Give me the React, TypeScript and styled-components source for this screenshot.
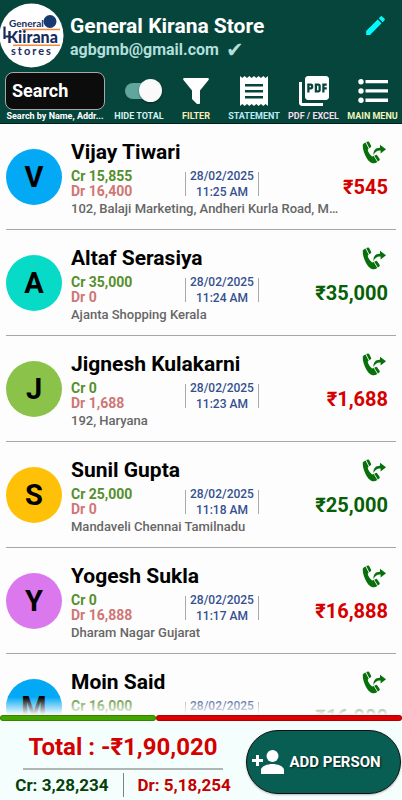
import React, { useState } from "react";
import styled, { createGlobalStyle, css } from "styled-components";

const GlobalStyle = createGlobalStyle`
  * { box-sizing: border-box; }
  body { margin: 0; background: #fdfdfd; font-family: Roboto, "Noto Sans", sans-serif; font-weight: 700; }
  button, input { font: inherit; color: inherit; }
  button { border: 0; padding: 0; background: none; cursor: pointer; }
  h1, h2, p, ul { margin: 0; padding: 0; font-weight: inherit; }
`;

const Screen = styled.div`
  display: flex;
  flex-direction: column;
  height: 100vh;
  overflow: hidden;
`;

const Header = styled.header`
  flex: none;
  background: #06453c;
  border-bottom: 1px solid #02201c;
  color: #fff;
`;

const Profile = styled.div`
  display: flex;
  gap: 6px;
  padding: 3px 14px 0 0;
`;

const Logo = styled.svg`
  display: block;
  flex: none;
  width: 64px;
  height: 65px;
`;

const Identity = styled.div`
  flex: 1;
  min-width: 0;
  padding-top: 11px;
`;

const StoreName = styled.h1`
  font-size: 21px;
  line-height: 24px;
  white-space: nowrap;
`;

const Email = styled.p`
  display: flex;
  align-items: center;
  gap: 7px;
  color: #b2dfdb;
  font-size: 16px;
  line-height: 24px;
`;

const Verified = styled.span`
  font-family: "DejaVu Sans", sans-serif;
  font-size: 21px;
`;

const EditButton = styled.button`
  align-self: flex-start;
  margin-top: 10px;
  color: #00fbff;
`;

const Icon = styled.svg<{ $w: number; $h?: number }>`
  display: block;
  flex: none;
  width: ${(p) => p.$w}px;
  height: ${(p) => p.$h ?? p.$w}px;
  fill: currentColor;
`;

const Toolbar = styled.div`
  display: grid;
  grid-template-columns: 110fr 58fr 56fr 60fr 59fr 59fr;
  padding-top: 4px;
`;

const toolLayout = css`
  display: flex;
  flex-direction: column;
  align-items: center;
`;

const ToolField = styled.label`${toolLayout}`;
const ToolButton = styled.button`${toolLayout}`;

const ToolIcon = styled.span`
  display: flex;
  align-items: center;
  justify-content: center;
  width: 100%;
  height: 37px;
`;

const ToolLabel = styled.span<{ $color: string }>`
  color: ${(p) => p.$color};
  font-size: 9px;
  line-height: 14px;
  white-space: nowrap;
`;

const SearchInput = styled.input`
  width: 100px;
  height: 38px;
  padding: 0 6px;
  background: #0c0c0c;
  border: 1px solid #a9a9a9;
  border-radius: 8px;
  outline: none;
  font-size: 18px;
  &::placeholder { color: #fff; opacity: 1; }
`;

const Toggle = styled.input`
  appearance: none;
  display: flex;
  align-items: center;
  width: 33px;
  height: 16px;
  margin: 0 0 0 4px;
  border-radius: 8px;
  background: #60a69d;
  &::before {
    content: "";
    width: 23px;
    height: 23px;
    flex: none;
    border-radius: 50%;
    background: #fafafa;
    box-shadow: 0 1px 2px #0006;
  }
  &:checked::before { margin-left: 14px; }
`;

const ListArea = styled.main`
  flex: 1;
  min-height: 0;
  overflow: hidden;
  position: relative;
  &::after {
    content: "";
    position: absolute;
    inset: auto 0 0;
    height: 18px;
    background: linear-gradient(#fdfdfd00, #fdfdfd);
  }
`;

const List = styled.ul`
  list-style: none;
  padding: 0 6px;
`;

const Row = styled.li`
  display: flex;
  align-items: flex-start;
  gap: 9px;
  height: 106px;
  padding: 14px 8px 0 0;
  border-bottom: 1px solid #a6a6a6;
`;

const Avatar = styled.div<{ $color: string }>`
  flex: none;
  display: flex;
  align-items: center;
  justify-content: center;
  width: 56px;
  height: 56px;
  margin-top: 11px;
  border-radius: 50%;
  background: ${(p) => p.$color};
  color: #000;
  font-size: 29px;
`;

const Details = styled.div`
  flex: 1;
  min-width: 0;
`;

const Name = styled.h2`
  margin-bottom: 3px;
  color: #000;
  font-size: 21px;
  line-height: 28px;
`;

const Summary = styled.div`
  display: flex;
  align-items: center;
`;

const Ledger = styled.div`
  width: 114px;
  font-size: 14px;
  line-height: 15px;
`;

const Credit = styled.p`color: #568f2c;`;
const Debit = styled.p`color: #cf7676;`;

const Stamp = styled.div`
  display: flex;
  flex-direction: column;
  justify-content: center;
  height: 24px;
  padding: 0 4px;
  border: solid #a9a9a9;
  border-width: 0 1px;
  color: #34508f;
  font-size: 12px;
  font-weight: 500;
  line-height: 16px;
  text-align: center;
`;

const Address = styled.p`
  max-width: 270px;
  overflow: hidden;
  color: #666;
  font-size: 13px;
  font-weight: 500;
  line-height: 20px;
  text-overflow: ellipsis;
  white-space: nowrap;
`;

const Side = styled.div`
  display: flex;
  flex-direction: column;
  align-items: flex-end;
  gap: 10px;
  width: 80px;
  margin-left: -50px;
  padding-top: 3px;
`;

const CallButton = styled.button`
  margin-right: 2px;
  color: #07700b;
`;

const Amount = styled.p<{ $due: boolean }>`
  color: ${(p) => (p.$due ? "#d50000" : "#066006")};
  font-size: 20px;
  line-height: 24px;
`;

const Ratio = styled.div`
  display: flex;
  flex: none;
`;

const RatioPart = styled.div<{ $color: string; $share: number }>`
  flex: ${(p) => p.$share};
  height: 6px;
  border: 1px solid #0003;
  border-radius: 3px;
  background: ${(p) => p.$color};
`;

const Footer = styled.footer`
  flex: none;
  display: flex;
  align-items: flex-start;
  justify-content: space-between;
  padding: 9px 1px 3px 0;
  background: #f4fffd;
`;

const Totals = styled.div`
  flex: 1;
  display: flex;
  flex-direction: column;
  align-items: center;
  padding-top: 2px;
`;

const GrandTotal = styled.p`
  width: 200px;
  padding-bottom: 6px;
  border-bottom: 2px solid #b1b5b4;
  color: #d50000;
  font-size: 24px;
  line-height: 30px;
  white-space: nowrap;
  text-align: center;
`;

const Split = styled.div`
  display: flex;
  align-items: center;
  margin-top: 3px;
  font-size: 17px;
  line-height: 24px;
`;

const SplitValue = styled.p<{ $color: string }>`
  color: ${(p) => p.$color};
  & + & { margin-left: 14px; padding-left: 14px; border-left: 1px solid #808080; }
`;

const AddButton = styled.button`
  display: flex;
  align-items: center;
  justify-content: center;
  gap: 4px;
  width: 155px;
  height: 64px;
  padding-right: 14px;
  border: 1px solid #111;
  border-radius: 32px;
  background: #095e54;
  box-shadow: 0 1px 2px #0004;
  color: #fff;
  font-size: 15px;
  text-shadow: 1px 1px 2px #000b;
  white-space: nowrap;
`;

const people = [
  { name: "Vijay Tiwari", cr: "15,855", dr: "16,400", time: "11:25 AM", address: "102, Balaji Marketing, Andheri Kurla Road, Mumbai", amount: "545", due: true, color: "#03a9f4" },
  { name: "Altaf Serasiya", cr: "35,000", dr: "0", time: "11:24 AM", address: "Ajanta Shopping Kerala", amount: "35,000", due: false, color: "#08dac8" },
  { name: "Jignesh Kulakarni", cr: "0", dr: "1,688", time: "11:23 AM", address: "192, Haryana", amount: "1,688", due: true, color: "#8bc34a" },
  { name: "Sunil Gupta", cr: "25,000", dr: "0", time: "11:18 AM", address: "Mandaveli Chennai Tamilnadu", amount: "25,000", due: false, color: "#ffc107" },
  { name: "Yogesh Sukla", cr: "0", dr: "16,888", time: "11:17 AM", address: "Dharam Nagar Gujarat", amount: "16,888", due: true, color: "#dc78ee" },
  { name: "Moin Said", cr: "16,000", dr: "0", time: "11:16 AM", address: "", amount: "16,000", due: false, color: "#03a9f4" },
];

const StoreLogo = () => (
  <Logo viewBox="0 0 64 65" role="img" aria-label="General Kirana Stores">
    <circle cx="31.5" cy="32.5" r="32" fill="#fff" />
    <path d="M22 26.500H60M13 42.300H60" stroke="#f58a3c" strokeWidth="1.500" />
    <circle cx="50" cy="18.500" r="6.500" fill="#173a70" />
    <g fill="#182c5e" fontFamily="Lato, sans-serif">
      <text x="9" y="24" fontSize="10" fontWeight="700">General</text>
      <text x="7" y="39.500" fontSize="16" fontWeight="900">Kiirana</text>
      <text x="11" y="52" fontSize="11" letterSpacing="2">stores</text>
    </g>
    <path d="M4.500 23.500V36M4.500 33.500H9" stroke="#182c5e" strokeWidth="2.200" fill="none" />
  </Logo>
);

const CallIcon = () => (
  <Icon $w={24} viewBox="0 0 24 24" aria-hidden="true">
    <path d="M.8 3.800C1 2.700 2.200 1.900 3.500 1.400L6.700 7.700 5.700 8.800C6.300 11.300 8 13.900 10.100 15.600L11.700 15 15.300 21C10.500 24.200 6.500 20.600 3.900 15.700 2 11.900.5 7.600.8 3.800Z" />
    <path d="M4.200 1.100 6.100.5Q6.900.4 7.300 1.200L9.200 4.900Q9.400 5.800 8.700 6.300L7.300 7.200Z" />
    <path d="M12.300 14.800 13.700 13.900Q14.500 13.600 15.100 14.300L17.700 18Q18 18.900 17.300 19.500L15.900 20.600Z" />
    <path d="M11.500 14C11 9.200 14 6.400 18 6.700V3.700L24 8.200 18.600 12.400V9.600C15.500 9.200 13.100 10.700 11.500 14Z" />
  </Icon>
);

export default function App() {
  const [hidden, setHidden] = useState(true);
  return (
    <>
      <GlobalStyle />
      <Screen>
        <Header>
          <Profile>
            <StoreLogo />
            <Identity>
              <StoreName>General Kirana Store</StoreName>
              <Email>
                agbgmb@gmail.com
                <Verified>✔</Verified>
              </Email>
            </Identity>
            <EditButton aria-label="Edit store">
              <Icon $w={25} viewBox="0 0 24 24"><path d="M3 17.250V21h3.750L17.810 9.940l-3.750-3.750L3 17.250zM20.710 7.040a1 1 0 0 0 0-1.410l-2.340-2.340a1 1 0 0 0-1.410 0l-1.830 1.830 3.750 3.750 1.830-1.830z" /></Icon>
            </EditButton>
          </Profile>
          <Toolbar>
            <ToolField>
              <ToolIcon><SearchInput type="text" placeholder="Search" /></ToolIcon>
              <ToolLabel $color="#fff">Search by Name, Addr...</ToolLabel>
            </ToolField>
            <ToolField>
              <ToolIcon><Toggle type="checkbox" role="switch" checked={hidden} onChange={() => setHidden(!hidden)} /></ToolIcon>
              <ToolLabel $color="#d5f1ee">HIDE TOTAL</ToolLabel>
            </ToolField>
            <ToolButton>
              <ToolIcon>
                <Icon $w={26} viewBox="0 0 26 26"><path d="M1 0H25Q26.500.5 25.500 2L17 12.500V25Q17 26 16 26H14L9 21V12.500L.5 2Q-.5.5 1 0Z" /></Icon>
              </ToolIcon>
              <ToolLabel $color="#ffecb3">FILTER</ToolLabel>
            </ToolButton>
            <ToolButton>
              <ToolIcon>
                <Icon $w={28} $h={30} viewBox="0 0 28 30"><path fillRule="evenodd" d="M0 0 2.300 2 4.600 0 7 2 9.300 0 11.600 2 14 0 16.300 2 18.600 0 21 2 23.300 0 25.600 2 28 0V30L25.600 28 23.300 30 21 28 18.600 30 16.300 28 14 30 11.600 28 9.300 30 7 28 4.600 30 2.300 28 0 30ZM5 8V10.600H23V8ZM5 14V16.600H23V14ZM5 20V22.600H23V20Z" /></Icon>
              </ToolIcon>
              <ToolLabel $color="#b8ebf5">STATEMENT</ToolLabel>
            </ToolButton>
            <ToolButton>
              <ToolIcon>
                <Icon $w={36} viewBox="0 0 24 24"><path d="M20 2H8c-1.100 0-2 .9-2 2v12c0 1.100.9 2 2 2h12c1.100 0 2-.9 2-2V4c0-1.100-.9-2-2-2zm-8.500 7.500c0 .83-.67 1.500-1.500 1.500H9v2H7.500V7H10c.83 0 1.500.67 1.500 1.500v1zm5 2c0 .83-.67 1.500-1.500 1.500h-2.500V7H15c.83 0 1.500.67 1.500 1.500v3zm4-3H19v1h1.500V11H19v2h-1.500V7h3v1.500zM9 9.500h1v-1H9v1zM4 6H2v14c0 1.100.9 2 2 2h14v-2H4V6zm10 5.500h1v-3h-1v3z" /></Icon>
              </ToolIcon>
              <ToolLabel $color="#f8dce8">PDF / EXCEL</ToolLabel>
            </ToolButton>
            <ToolButton>
              <ToolIcon>
                <Icon $w={30} $h={26} viewBox="0 0 30 26"><path d="M7.500 2H30V5.300H7.500ZM7.500 11.300H30V14.600H7.500ZM7.500 20.600H30V24H7.500Z" /><circle cx="3" cy="3.700" r="2.700" /><circle cx="3" cy="13" r="2.700" /><circle cx="3" cy="22.300" r="2.700" /></Icon>
              </ToolIcon>
              <ToolLabel $color="#edf7b8">MAIN MENU</ToolLabel>
            </ToolButton>
          </Toolbar>
        </Header>
        <ListArea>
          <List>
            {people.map((p) => (
              <Row key={p.name}>
                <Avatar $color={p.color}>{p.name[0]}</Avatar>
                <Details>
                  <Name>{p.name}</Name>
                  <Summary>
                    <Ledger><Credit>Cr {p.cr}</Credit><Debit>Dr {p.dr}</Debit></Ledger>
                    <Stamp><span>28/02/2025</span><span>{p.time}</span></Stamp>
                  </Summary>
                  <Address>{p.address}</Address>
                </Details>
                <Side>
                  <CallButton aria-label={`Call ${p.name}`}><CallIcon /></CallButton>
                  <Amount $due={p.due}>₹{p.amount}</Amount>
                </Side>
              </Row>
            ))}
          </List>
        </ListArea>
        <Ratio>
          <RatioPart $color="#43a400" $share={328234} />
          <RatioPart $color="#dc0000" $share={518254} />
        </Ratio>
        <Footer>
          <Totals>
            <GrandTotal>Total : -₹1,90,020</GrandTotal>
            <Split>
              <SplitValue $color="#063f0a">Cr: 3,28,234</SplitValue>
              <SplitValue $color="#c40000">Dr: 5,18,254</SplitValue>
            </Split>
          </Totals>
          <AddButton>
            <Icon $w={33} $h={24} viewBox="0 0 33 24"><circle cx="20.500" cy="6" r="6" /><path d="M9 24V20C9 16 16 14 20.500 14S32 16 32 20V24ZM4 5H7V9H11V12H7V16H4V12H0V9H4Z" /></Icon>
            ADD PERSON
          </AddButton>
        </Footer>
      </Screen>
    </>
  );
}
